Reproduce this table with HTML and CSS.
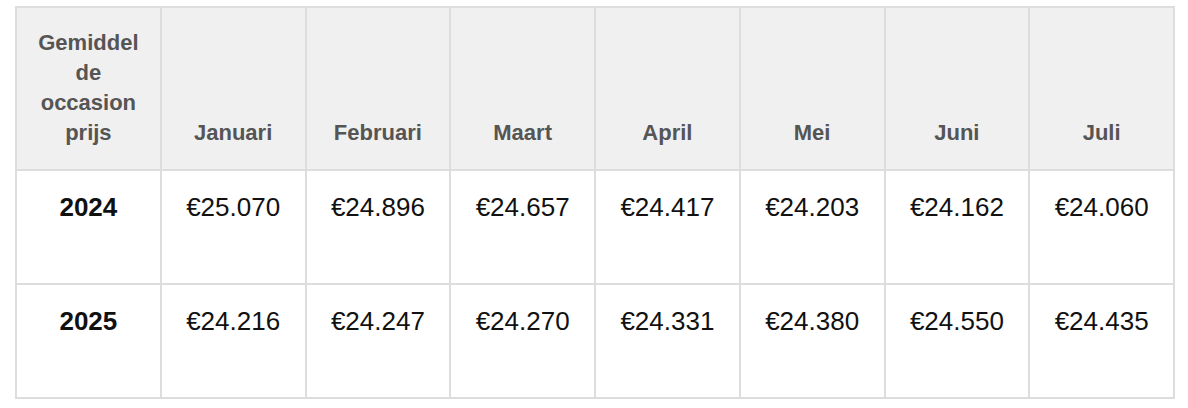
FILE: index.html
```html
<!DOCTYPE html>
<html lang="nl">
<head>
<meta charset="utf-8">
<link rel="stylesheet" href="styles.css">
</head>
<body>
<table class="prices">
  <thead>
    <tr class="head-row">
      <th>Gemiddel<br>de<br>occasion<br>prijs</th>
      <th>Januari</th>
      <th>Februari</th>
      <th>Maart</th>
      <th>April</th>
      <th>Mei</th>
      <th>Juni</th>
      <th>Juli</th>
    </tr>
  </thead>
  <tbody>
    <tr class="body-row">
      <td class="year">2024</td>
      <td>€25.070</td>
      <td>€24.896</td>
      <td>€24.657</td>
      <td>€24.417</td>
      <td>€24.203</td>
      <td>€24.162</td>
      <td>€24.060</td>
    </tr>
    <tr class="body-row">
      <td class="year">2025</td>
      <td>€24.216</td>
      <td>€24.247</td>
      <td>€24.270</td>
      <td>€24.331</td>
      <td>€24.380</td>
      <td>€24.550</td>
      <td>€24.435</td>
    </tr>
  </tbody>
</table>
</body>
</html>
```

FILE: styles.css
```css
html, body {
  margin: 0;
  padding: 0;
  background: #ffffff;
}

body {
  padding: 6px 0 0 15px;
  font-family: "Liberation Sans", Arial, Helvetica, sans-serif;
}

.prices {
  border-collapse: collapse;
  width: 1160px;
  table-layout: fixed;
  border: 2px solid #dddddd;
}

.prices th,
.prices td {
  border: 2px solid #dddddd;
  text-align: center;
  padding: 0;
}

.prices th {
  background: #f0f0f0;
  color: #555555;
  font-size: 22px;
  font-weight: bold;
  line-height: 30px;
  vertical-align: bottom;
  padding: 0 4px 21px;
  height: 140px;
}

.prices td {
  font-size: 26px;
  color: #111111;
  vertical-align: top;
  padding-top: 21px;
  height: 91px;
  line-height: 30px;
}

.prices td.year {
  font-weight: bold;
}
```
